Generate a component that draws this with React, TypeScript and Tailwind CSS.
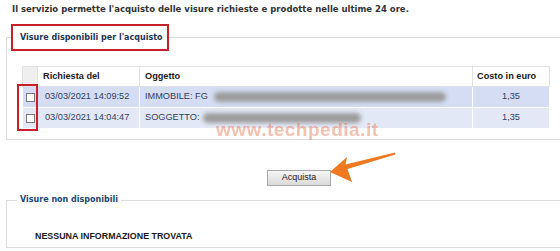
export default function App() {
  const rows = [
    { date: "03/03/2021 14:09:52", obj: "IMMOBILE: FG", blur: "w-[232px] ml-[6px]", bg: "bg-[#d4ddf4]" },
    { date: "03/03/2021 14:04:47", obj: "SOGGETTO:", blur: "w-[158px] ml-[4px]", bg: "bg-[#e3e8f6]" },
  ];

  return (
    <div className="relative w-[560px] h-[251px] overflow-hidden bg-white font-['Liberation_Sans',Arial,sans-serif]">
      {/* intro */}
      <p className="pl-[12px] pt-[4px] text-[8.5px] font-bold text-[#333] font-['DejaVu_Sans',sans-serif] leading-[10px]">
        Il servizio permette l'acquisto delle visure richieste e prodotte nelle ultime 24 ore.
      </p>

      {/* visure disponibili */}
      <fieldset className="ml-[6px] mt-[10px] w-[560px] h-[116px] border border-[#dcdcdc] px-[4px]">
        <legend className="border-2 border-[#c8202a] bg-white leading-[23px] w-[158px] pl-[7px] text-[8px] font-bold text-[#1f3556] font-['DejaVu_Sans',sans-serif]">
          Visure disponibili per l'acquisto
        </legend>

        <div className="relative ml-[11px] mt-[15px] w-[527px]">
          <table className="w-[527px] border-collapse text-[9.2px] table-fixed">
            <colgroup>
              <col className="w-[15px]" />
              <col className="w-[102px]" />
              <col className="w-[333px]" />
              <col className="w-[77px]" />
            </colgroup>
            <thead>
              <tr className="h-[20px] text-left font-bold text-[#1a1a1a]">
                <th className="border border-[#e2e2e2] bg-[#efefef]"></th>
                <th className="border border-[#e2e2e2] pl-[5px]">Richiesta del</th>
                <th className="border border-[#e2e2e2] pl-[5px]">Oggetto</th>
                <th className="border border-[#e2e2e2] pl-[4px]">Costo in euro</th>
              </tr>
            </thead>
            <tbody className="text-[#33405f]">
              {rows.map((r) => (
                <tr key={r.date} className={`h-[21px] ${r.bg}`}>
                  <td className="border border-white">
                    <div className="mx-auto w-[9px] h-[9px] border border-[#7a7a7a] bg-white"></div>
                  </td>
                  <td className="border border-white pl-[7px] whitespace-nowrap">{r.date}</td>
                  <td className="border border-white pl-[5px] whitespace-nowrap">
                    <span className="align-middle">{r.obj}</span>
                    <span className={`inline-block align-middle h-[10px] rounded-full bg-[#9c9c9c] blur-[2px] ${r.blur}`}></span>
                  </td>
                  <td className="border border-white text-center">1,35</td>
                </tr>
              ))}
            </tbody>
          </table>

          {/* red highlight around checkboxes */}
          <div className="absolute left-[-5px] top-[18px] w-[21px] h-[47px] border-2 border-[#c8202a]"></div>

          {/* watermark */}
          <div className="absolute left-[194px] top-[50px] text-[19px] font-bold tracking-[0.5px] text-[#e8643c] opacity-40 font-['Liberation_Sans',sans-serif] whitespace-nowrap">
            www.techpedia.it
          </div>
        </div>
      </fieldset>

      {/* button */}
      <div className="relative mt-[23px] h-[16px]">
        <button className="ml-[267px] w-[64px] h-[16px] border border-[#a8a8a8] bg-gradient-to-b from-[#f6f6f6] to-[#dadada] text-[9px] text-[#222] leading-none">
          Acquista
        </button>
        <svg className="absolute left-[325px] top-[-15px]" width="75" height="40" viewBox="0 0 75 40">
          <path d="M5 24 L22 9 L20.5 16.5 L70 4.5 L70.5 6.5 L22.5 21 L27 34 Z" fill="#f07820" />
        </svg>
      </div>

      {/* visure non disponibili */}
      <fieldset className="ml-[6px] mt-[15px] w-[560px] h-[54px] border border-[#dcdcdc] px-[4px]">
        <legend className="ml-[6px] px-[3px] text-[8px] font-bold text-[#1e4677] font-['DejaVu_Sans',sans-serif]">
          Visure non disponibili
        </legend>
        <p className="ml-[24px] mt-[24px] text-[8.9px] font-bold text-[#1a1a1a]">NESSUNA INFORMAZIONE TROVATA</p>
      </fieldset>
    </div>
  );
}
